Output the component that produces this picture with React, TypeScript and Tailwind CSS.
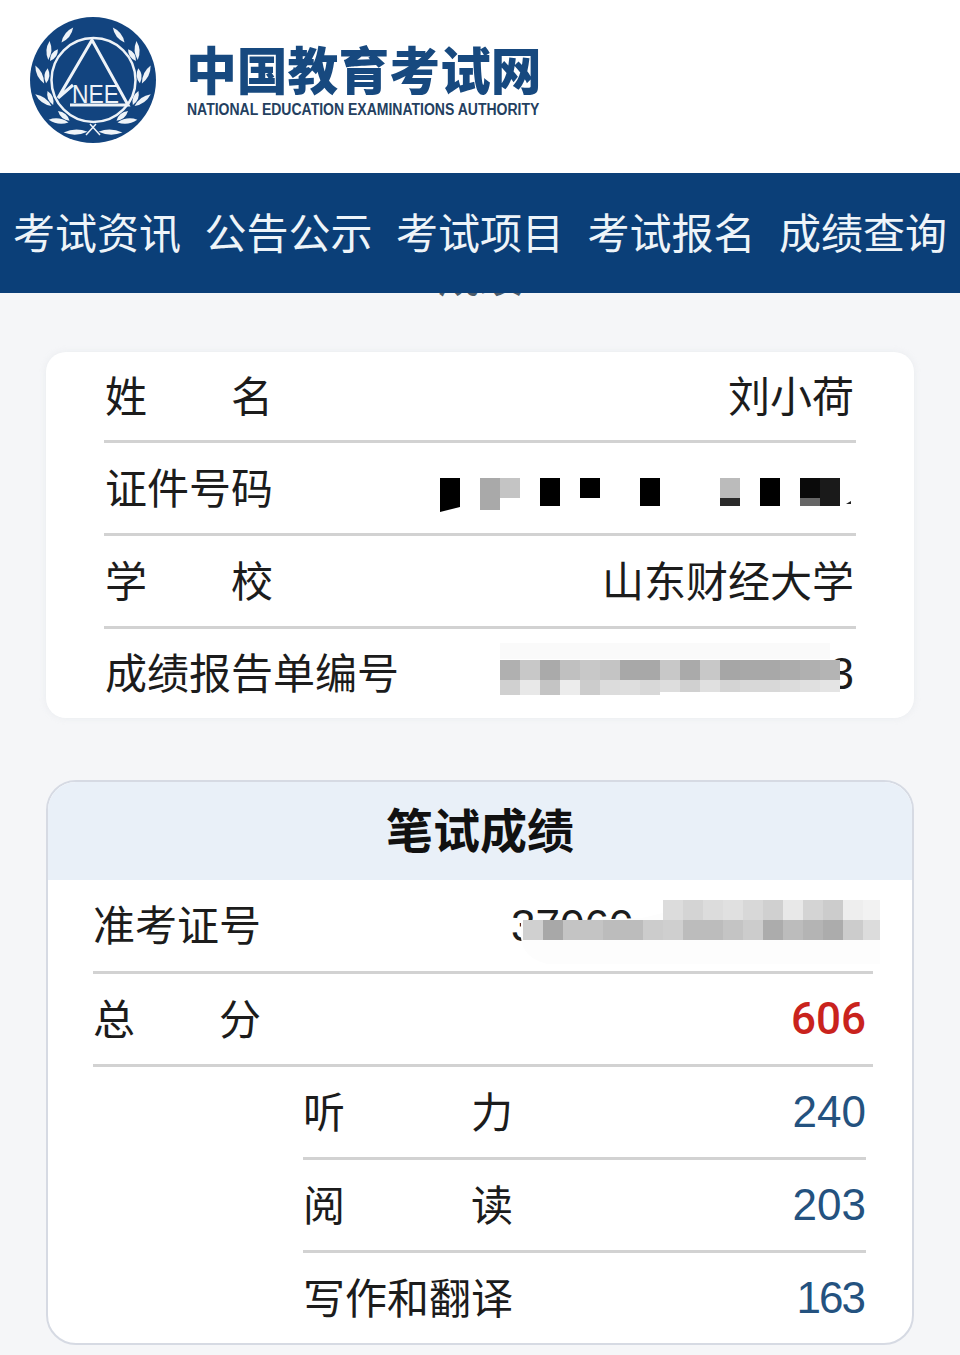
import React from 'react';

const cjk = { fontFamily: '"Noto Sans CJK SC", "Noto Sans", sans-serif' };
const latin = { fontFamily: '"Liberation Sans", sans-serif' };
const NAV = ['考试资讯', '公告公示', '考试项目', '考试报名', '成绩查询'];

// laurel on the right side, t = degrees up from the bottom of the seal
const LEAVES = [
  { t: 6, r: 52, tilt: 8, len: 24 },
  { t: 30, r: 49, tilt: 22, len: 20 },
  { t: 30, r: 47, tilt: -10, len: 15 },
  { t: 58, r: 49, tilt: 22, len: 20 },
  { t: 58, r: 47, tilt: -10, len: 15 },
  { t: 86, r: 49, tilt: 22, len: 20 },
  { t: 86, r: 47, tilt: -10, len: 15 },
  { t: 114, r: 49, tilt: 20, len: 19 },
  { t: 114, r: 47, tilt: -10, len: 14 },
  { t: 140, r: 49, tilt: 12, len: 19 },
];

const Laurel: React.FC = () => (
  <>
    {LEAVES.map((l, i) => {
      const rad = (l.t * Math.PI) / 180;
      const x = 63 + l.r * Math.sin(rad);
      const y = 63 + l.r * Math.cos(rad);
      return (
        <path
          key={i}
          d={`M0 0 Q${l.len / 2} -5 ${l.len} 0 Q${l.len / 2} 5 0 0 Z`}
          fill="#eef3f8"
          transform={`translate(${x} ${y}) rotate(${-l.t + l.tilt})`}
        />
      );
    })}
  </>
);

const Logo: React.FC = () => (
  <svg width="126" height="126" viewBox="0 0 126 126" className="shrink-0">
    <circle cx="63" cy="63" r="63" fill="#12447f" />
    <Laurel />
    <g transform="translate(126 0) scale(-1 1)">
      <Laurel />
    </g>
    <circle cx="63.5" cy="63" r="42" fill="#12447f" stroke="#eef3f8" strokeWidth="2.5" />
    <path d="M28 81 L62 23 L98 88 L40 88 M28 81 L43 68" fill="none" stroke="#eef3f8" strokeWidth="3" />
    <text x="42" y="86" fontSize="25" fill="#eef3f8" textLength="47" lengthAdjust="spacingAndGlyphs" style={latin}>
      NEE
    </text>
    <path d="M56 118 L66 107 M70 118 L60 107" fill="none" stroke="#eef3f8" strokeWidth="1.5" />
  </svg>
);

const SpreadLabel: React.FC<{ a: string; b: string; width: string }> = ({ a, b, width }) => (
  <div className={`flex justify-between mb-[5px] ${width}`}>
    <span>{a}</span>
    <span>{b}</span>
  </div>
);

const IdMosaic: React.FC = () => (
  <svg width="416" height="40" viewBox="0 0 416 40" className="absolute left-[336px] top-[33px]">
    <path d="M0 2 H20 V31 L0 36 Z" fill="#000" />
    <rect x="40" y="2" width="20" height="32" fill="#a9a9a9" />
    <rect x="60" y="2" width="20" height="20" fill="#c4c4c4" />
    <rect x="100" y="2" width="20" height="28" fill="#000" />
    <rect x="140" y="2" width="20" height="20" fill="#000" />
    <rect x="200" y="2" width="20" height="28" fill="#000" />
    <rect x="280" y="2" width="20" height="20" fill="#bbb" />
    <rect x="280" y="22" width="20" height="8" fill="#2a2a2a" />
    <rect x="320" y="2" width="20" height="28" fill="#000" />
    <rect x="360" y="2" width="20" height="20" fill="#0a0a0a" />
    <rect x="360" y="22" width="20" height="8" fill="#666" />
    <rect x="380" y="2" width="20" height="28" fill="#1a1a1a" />
    <path d="M406 28 L411 25 L411 28 Z" fill="#222" />
  </svg>
);

const reportTop = ['#b0b0b0', '#c8c8c8', '#aaaaaa', '#c0c0c0', '#c8c8c8', '#c4c4c4', '#a8a8a8', '#a8a8a8', '#c8c8c8', '#aaaaaa', '#c8c8c8', '#a6a6a6', '#a8a8a8', '#a8a8a8', '#acacac', '#b0b0b0', '#b4b4b4'];
const reportBottom = ['#d0d0d0', '#e8e8e8', '#c4c4c4', '#ececec', '#cccccc', '#dcdcdc', '#dedede', '#d8d8d8', '#dddddd', '#d0d0d0', '#e0e0e0', '#d4d4d4', '#d8d8d8', '#d8d8d8', '#dcdcdc', '#e0e0e0', '#e4e4e4'];

const ReportMosaic: React.FC = () => (
  <svg width="350" height="66" viewBox="0 0 350 66" className="absolute left-[386px] top-[8px]">
    <rect x="10" y="6" width="330" height="16" fill="#fafafa" />
    {reportTop.map((c, i) => (
      <rect key={i} x={10 + i * 20} y="23" width="20" height="20" fill={c} />
    ))}
    {reportBottom.map((c, i) => (
      <rect key={i} x={10 + i * 20} y="43" width="20" height={i < 8 ? 15 : 12} fill={c} />
    ))}
  </svg>
);

const ticketTop = ['#f7f7f7', '#f4f4f4', '#f2f2f2', '#efefef', '#ebebeb', '#e6e6e6', '#e2e2e2', '#dcdcdc', '#d4d4d4', '#dcdcdc', '#e0e0e0', '#d8d8d8', '#d0d0d0', '#e8e8e8', '#d4d4d4', '#cccccc', '#eeeeee', '#f2f2f2'];
const ticketBottom = ['#d0d0d0', '#a8a8a8', '#c4c4c4', '#c4c4c4', '#bcbcbc', '#bcbcbc', '#cccccc', '#cfcfcf', '#bcbcbc', '#bcbcbc', '#c4c4c4', '#cccccc', '#acacac', '#bcbcbc', '#b4b4b4', '#acacac', '#cccccc', '#dcdcdc'];

const TicketMosaic: React.FC = () => (
  <svg width="363" height="72" viewBox="0 0 363 72" className="absolute left-[424px] top-[18px]">
    <path d="M4 24 L125 20 L200 2 L363 2 V66 L30 66 Q6 60 4 40 Z" fill="#fdfdfd" />
    {ticketTop.map((c, i) =>
      i >= 7 ? <rect key={i} x={6 + i * 20} y="2" width="20" height="20" fill={c} /> : null
    )}
    {ticketBottom.map((c, i) => (
      <rect key={i} x={6 + i * 20} y="22" width="20" height="20" fill={c} />
    ))}
  </svg>
);

export default function App() {
  return (
    <div className="w-[960px] h-[1355px] overflow-hidden bg-[#f5f6f8] text-[42px] leading-none text-[#1c1c1c]" style={cjk}>
      <header className="h-[173px] bg-white flex items-start pt-[17px] pl-[30px] gap-[31px]">
        <Logo />
        <div className="pt-[26px] flex flex-col">
          <div className="w-[353px] -ml-[1px] text-[50.8px] leading-[50px] font-black text-[#17497f] whitespace-nowrap">中国教育考试网</div>
          <div
            className="mt-[8px] w-[353px] text-[16px] leading-[18px] font-bold text-[#24405f] whitespace-nowrap origin-left scale-x-[0.875]"
            style={latin}
          >
            NATIONAL EDUCATION EXAMINATIONS AUTHORITY
          </div>
        </div>
      </header>

      <nav className="h-[120px] bg-[#0b3f78] flex items-center justify-between px-[13px] pb-[5px] text-[#eef4f9]">
        {NAV.map(item => (
          <span key={item} className="whitespace-nowrap">{item}</span>
        ))}
      </nav>

      <div className="h-[5px] overflow-hidden flex justify-center">
        <div className="text-[42px] leading-[42px] font-medium -mt-[40px] text-[#4a5a6a]">成绩</div>
      </div>

      <section className="mt-[54px] mx-[46px] px-[58px] bg-white rounded-[20px] shadow-[0_0_6px_rgba(230,232,236,0.8)]">
        <div className="h-[91px] flex items-center justify-between border-b-[3px] border-[#d2d2d2] pl-[1px] pr-[2px]">
          <SpreadLabel a="姓" b="名" width="w-[168px]" />
          <span className="mb-[5px]">刘小荷</span>
        </div>
        <div className="relative h-[93px] flex items-center border-b-[3px] border-[#d2d2d2] pl-[1px] pr-[2px]">
          <span className="mb-[5px]">证件号码</span>
          <IdMosaic />
        </div>
        <div className="h-[93px] flex items-center justify-between border-b-[3px] border-[#d2d2d2] pl-[1px] pr-[2px]">
          <SpreadLabel a="学" b="校" width="w-[168px]" />
          <span className="mb-[5px]">山东财经大学</span>
        </div>
        <div className="relative h-[89px] flex items-center justify-between pl-[1px] pr-[2px]">
          <span className="mb-[5px]">成绩报告单编号</span>
          <span className="text-[44px]" style={latin}>3</span>
          <ReportMosaic />
        </div>
      </section>

      <section className="mt-[62px] mx-[46px] h-[565px] bg-white rounded-[30px] border-2 border-[#d6dae3] overflow-hidden">
        <div className="h-[98px] bg-[#e9f0f8] flex items-center justify-center pb-[8px] text-[47px] font-bold text-[#111]">笔试成绩</div>

        <div className="relative ml-[45px] mr-[39px] h-[94px] flex items-center justify-between border-b-[3px] border-[#d2d2d2] pr-[7px]">
          <span className="mb-[5px]">准考证号</span>
          <span className="absolute left-[418px] top-[24px] text-[44px]" style={latin}>37060</span>
          <TicketMosaic />
        </div>

        <div className="ml-[45px] mr-[39px] h-[93px] flex items-center justify-between border-b-[3px] border-[#d2d2d2] pr-[7px]">
          <SpreadLabel a="总" b="分" width="w-[168px]" />
          <span className="text-[44px] font-medium text-[#c9231d]" style={{ fontFamily: 'Roboto, sans-serif' }}>606</span>
        </div>

        <div className="ml-[255px] mr-[46px] h-[93px] flex items-center justify-between border-b-[3px] border-[#d2d2d2]">
          <SpreadLabel a="听" b="力" width="w-[210px]" />
          <span className="text-[44px] text-[#24527f]" style={latin}>240</span>
        </div>
        <div className="ml-[255px] mr-[46px] h-[93px] flex items-center justify-between border-b-[3px] border-[#d2d2d2]">
          <SpreadLabel a="阅" b="读" width="w-[210px]" />
          <span className="text-[44px] text-[#24527f]" style={latin}>203</span>
        </div>
        <div className="ml-[255px] mr-[46px] h-[90px] flex items-center justify-between pr-[2px]">
          <span className="mb-[5px]">写作和翻译</span>
          <span className="text-[44px] tracking-[-2px] text-[#24527f]" style={latin}>163</span>
        </div>
      </section>
    </div>
  );
}
